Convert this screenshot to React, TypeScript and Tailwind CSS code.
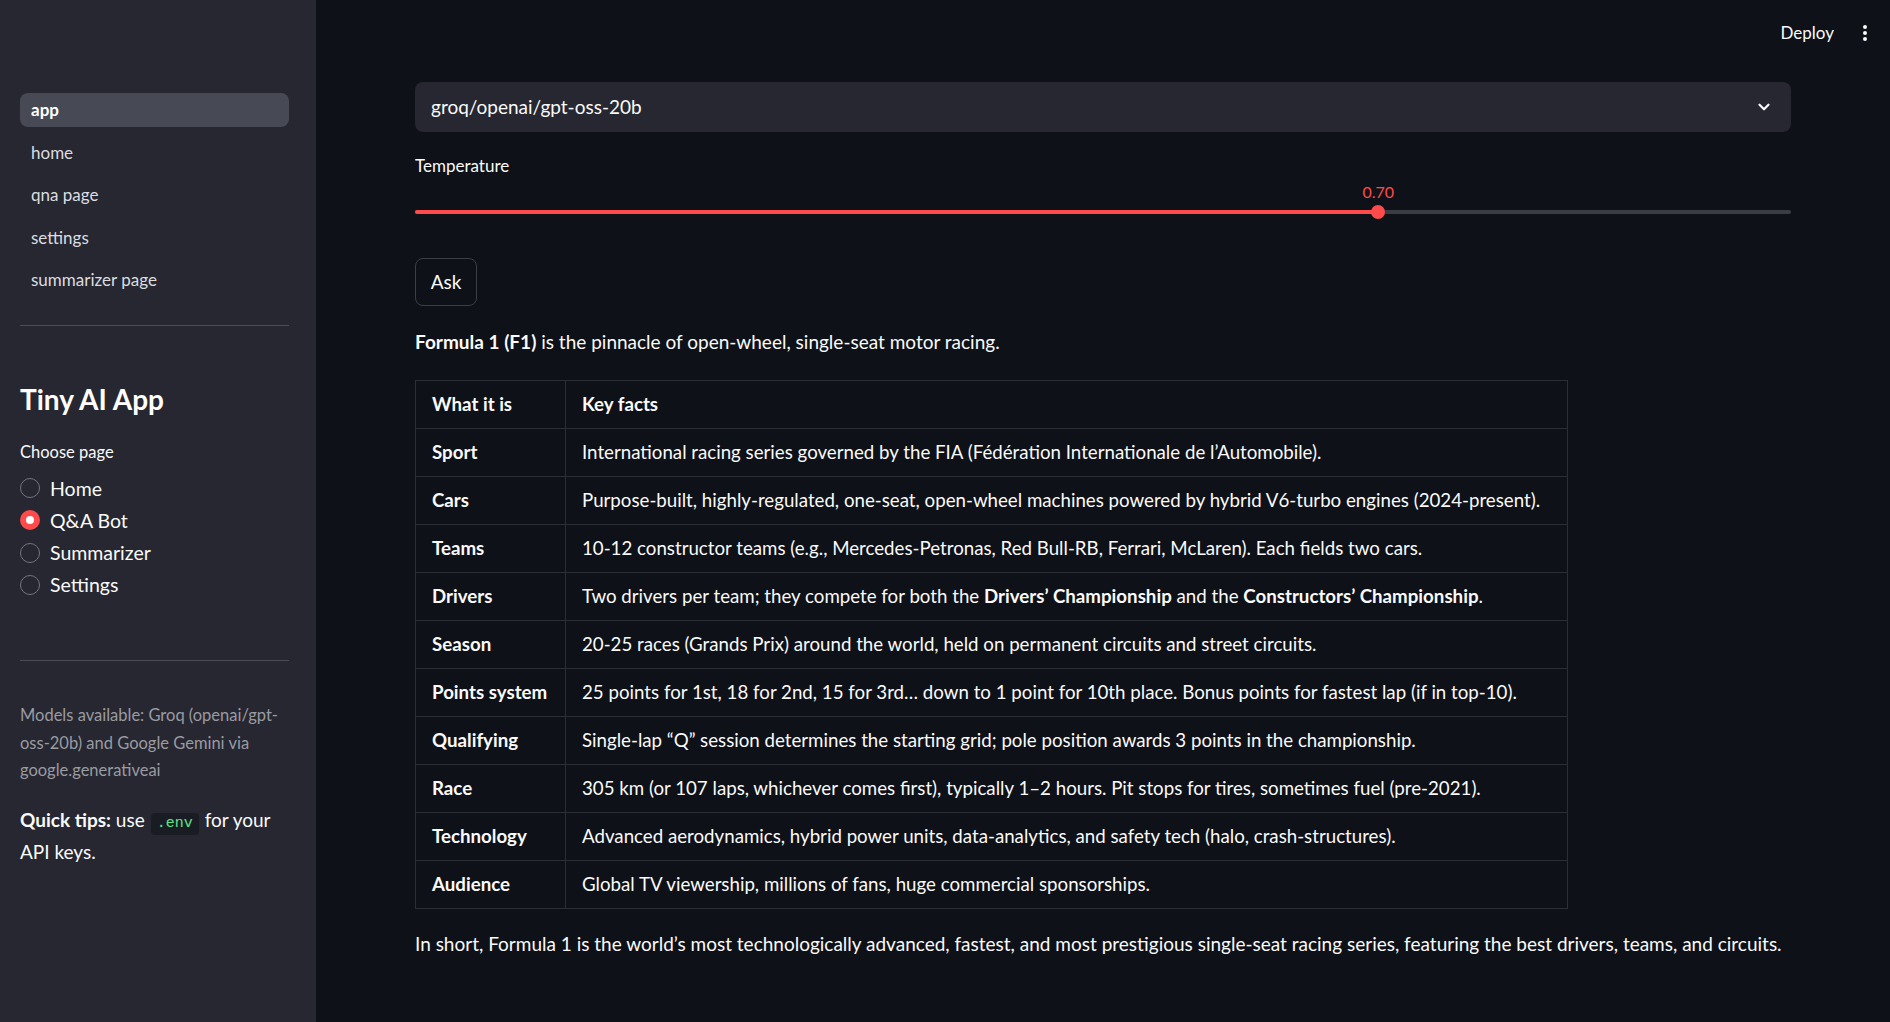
import { ChevronDown } from "lucide-react";

const rows: { k: string; v: React.ReactNode }[] = [
  { k: "Sport", v: "International racing series governed by the FIA (Fédération Internationale de l’Automobile)." },
  { k: "Cars", v: "Purpose-built, highly-regulated, one-seat, open-wheel machines powered by hybrid V6-turbo engines (2024-present)." },
  { k: "Teams", v: "10-12 constructor teams (e.g., Mercedes-Petronas, Red Bull-RB, Ferrari, McLaren). Each fields two cars." },
  {
    k: "Drivers",
    v: (
      <>
        Two drivers per team; they compete for both the <b>Drivers’ Championship</b> and the{" "}
        <b>Constructors’ Championship</b>.
      </>
    ),
  },
  { k: "Season", v: "20-25 races (Grands Prix) around the world, held on permanent circuits and street circuits." },
  { k: "Points system", v: "25 points for 1st, 18 for 2nd, 15 for 3rd… down to 1 point for 10th place. Bonus points for fastest lap (if in top-10)." },
  { k: "Qualifying", v: "Single-lap “Q” session determines the starting grid; pole position awards 3 points in the championship." },
  { k: "Race", v: "305 km (or 107 laps, whichever comes first), typically 1–2 hours. Pit stops for tires, sometimes fuel (pre-2021)." },
  { k: "Technology", v: "Advanced aerodynamics, hybrid power units, data-analytics, and safety tech (halo, crash-structures)." },
  { k: "Audience", v: "Global TV viewership, millions of fans, huge commercial sponsorships." },
];

const navItems = ["app", "home", "qna page", "settings", "summarizer page"];
const radios = ["Home", "Q&A Bot", "Summarizer", "Settings"];

export default function App() {
  return (
    <div
      className="flex w-[1890px] h-[1022px] overflow-hidden bg-[#0e1117] text-[#fafafa]"
      style={{ fontFamily: "Lato, 'Noto Sans', sans-serif" }}
    >
      {/* Sidebar */}
      <aside className="w-[316px] shrink-0 bg-[#262730] pt-[93px] pl-[20px]">
        <div className="w-[269px]">
          <nav className="flex flex-col gap-[8.5px]">
            {navItems.map((item, i) => (
              <div
                key={item}
                className={`h-[34px] flex items-center px-[11px] rounded-lg text-[17px] ${
                  i === 0 ? "bg-[#474954] font-bold text-white" : "text-[#dcdde0]"
                }`}
              >
                {item}
              </div>
            ))}
          </nav>
          <div className="mt-[28px] h-px bg-[#4a4c56]" />

          <h1 className="mt-[55px] text-[28px] leading-[36px] font-bold text-white">Tiny AI App</h1>
          <p className="mt-[24px] text-[16.5px] leading-[22px]">Choose page</p>
          <div className="mt-[9px] flex flex-col">
            {radios.map((r, i) => (
              <div key={r} className="h-[32.3px] flex items-center gap-[10px]">
                {i === 1 ? (
                  <span className="w-[20px] h-[20px] rounded-full bg-[#ff4b4b] flex items-center justify-center">
                    <span className="w-[8px] h-[8px] rounded-full bg-white" />
                  </span>
                ) : (
                  <span className="w-[20px] h-[20px] rounded-full border-[1.5px] border-[#73757f]" />
                )}
                <span className="text-[19.5px]">{r}</span>
              </div>
            ))}
          </div>
          <div className="mt-[59px] h-px bg-[#4a4c56]" />

          <p className="mt-[41px] text-[16.5px] leading-[27.5px] text-[#9a9ba3] pr-[6px]">
            Models available: Groq (openai/gpt-oss-20b) and Google Gemini via google.generativeai
          </p>
          <p className="mt-[19px] text-[19px] leading-[32px]">
            <b>Quick tips:</b> use
            <code
              className="inline-block mx-[6px] px-[6px] leading-[22px] rounded bg-[#1a1c23] text-[#5ce488] text-[15px]"
              style={{ fontFamily: "'Liberation Mono', monospace" }}
            >
              .env
            </code>
            for your API keys.
          </p>
        </div>
      </aside>

      {/* Main */}
      <main className="flex-1 flex flex-col">
        <header className="h-[66px] flex items-center justify-end pr-[22px] gap-[28px]">
          <span className="text-[17px]">Deploy</span>
          <svg width="6" height="18" viewBox="0 0 6 18" fill="#fafafa">
            <circle cx="3" cy="3" r="2" />
            <circle cx="3" cy="9" r="2" />
            <circle cx="3" cy="15" r="2" />
          </svg>
        </header>

        <div className="px-[99px] pt-[16px] flex flex-col">
          <div className="h-[50px] rounded-lg bg-[#262730] flex items-center justify-between pl-[16px] pr-[18px]">
            <span className="text-[19px]">groq/openai/gpt-oss-20b</span>
            <ChevronDown size={18} strokeWidth={3} color="#fafafa" />
          </div>

          <p className="mt-[22px] text-[17px] leading-[24px]">Temperature</p>

          <div className="relative h-[44px]">
            <span
              className="absolute text-[16px] text-[#ff4b4b] -translate-x-1/2 top-[2px]"
              style={{ left: "70%" }}
            >
              0.70
            </span>
            <div className="absolute left-0 right-0 top-[32px] h-[4px] rounded-full bg-[#3b3d45]" />
            <div className="absolute left-0 top-[32px] h-[4px] rounded-l-full bg-[#ff4b4b]" style={{ width: "70%" }} />
            <div
              className="absolute top-[27px] w-[14px] h-[14px] rounded-full bg-[#ff4b4b] -translate-x-1/2"
              style={{ left: "70%" }}
            />
          </div>

          <button className="mt-[36px] w-[62px] h-[48px] rounded-lg border border-[#3d3f48] text-[19px] self-start">
            Ask
          </button>

          <p className="mt-[22px] text-[19px] leading-[28px]">
            <b>Formula 1 (F1)</b> is the pinnacle of open-wheel, single-seat motor racing.
          </p>

          <table className="mt-[24px] w-[1153px] border-collapse text-[18.7px] whitespace-nowrap">
            <thead>
              <tr className="h-[48px]">
                <th className="w-[150px] border border-[#2c2e36] px-[16px] text-left font-bold">What it is</th>
                <th className="border border-[#2c2e36] px-[16px] text-left font-bold">Key facts</th>
              </tr>
            </thead>
            <tbody>
              {rows.map((r) => (
                <tr key={r.k} className="h-[48px]">
                  <td className="border border-[#2c2e36] px-[16px] font-bold">{r.k}</td>
                  <td className="border border-[#2c2e36] px-[16px]">{r.v}</td>
                </tr>
              ))}
            </tbody>
          </table>

          <p className="mt-[21px] text-[19px] leading-[28px]">
            In short, Formula 1 is the world’s most technologically advanced, fastest, and most prestigious single-seat
            racing series, featuring the best drivers, teams, and circuits.
          </p>
        </div>
      </main>
    </div>
  );
}
